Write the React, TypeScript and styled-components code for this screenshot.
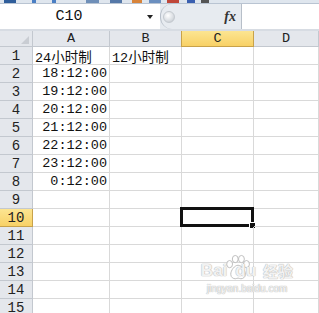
import React from 'react';
import styled, { createGlobalStyle, css } from 'styled-components';

const GlobalStyle = createGlobalStyle`
  html, body {
    margin: 0;
    padding: 0;
    background: #ffffff;
    overflow: hidden;
  }
`;

const COLS = ['A', 'B', 'C', 'D'];
const ROW_COUNT = 15;
const ACTIVE_COL = 'C';
const ACTIVE_ROW = 10;

const cellValues: Record<string, { text: string; align?: 'left' | 'right' }> = {
  A1: { text: '24小时制' },
  B1: { text: '12小时制' },
  A2: { text: '18:12:00', align: 'right' },
  A3: { text: '19:12:00', align: 'right' },
  A4: { text: '20:12:00', align: 'right' },
  A5: { text: '21:12:00', align: 'right' },
  A6: { text: '22:12:00', align: 'right' },
  A7: { text: '23:12:00', align: 'right' },
  A8: { text: '0:12:00', align: 'right' },
};

const cellFont = css`
  font-family: "Liberation Mono", "Noto Sans CJK SC", monospace;
  font-size: 13.5px;
  color: #111;
`;

const Frame = styled.div`
  width: 319px;
  height: 313px;
  overflow: hidden;
  display: flex;
  flex-direction: column;
  position: relative;
  background: #fff;
`;

const Toolbar = styled.div`
  flex: none;
  height: 3px;
  background: #dfe6ee;
  border-bottom: 1px solid #b9c4d2;
  display: flex;
  align-items: flex-end;
  overflow: hidden;
`;

const ToolIcon = styled.span<{ $x: number; $w: number; $color: string }>`
  display: block;
  margin-left: ${({ $x }) => $x}px;
  width: ${({ $w }) => $w}px;
  height: 3px;
  background: ${({ $color }) => $color};
  flex: none;
`;

const FormulaBar = styled.div`
  flex: none;
  height: 25px;
  display: flex;
  border-bottom: 2px solid #d7dce3;
  background: #e6eaef;
`;

const NameBox = styled.div`
  width: 160px;
  background: #fff;
  position: relative;
  display: flex;
  align-items: center;
  justify-content: center;
  font-family: "Liberation Mono", monospace;
  font-size: 15px;
  color: #111;
  padding-right: 22px;
  box-sizing: border-box;
`;

const DropArrow = styled.span`
  position: absolute;
  right: 7px;
  top: 11px;
  width: 0;
  height: 0;
  border-left: 3.5px solid transparent;
  border-right: 3.5px solid transparent;
  border-top: 4px solid #222;
`;

const FxArea = styled.div`
  width: 81px;
  display: flex;
  align-items: center;
  justify-content: space-between;
  background: #e7ebf0;
  border-radius: 12px 0 0 12px;
  border-left: 1px solid #b7bfc9;
  box-sizing: border-box;
  padding: 0 5px 0 2px;
`;

const Dimple = styled.span`
  width: 10px;
  height: 10px;
  border-radius: 50%;
  background: radial-gradient(circle at 40% 35%, #ffffff 0%, #d9dde2 60%, #b7bcc3 100%);
  border: 1px solid #c4c9cf;
`;

const FxLabel = styled.span`
  font-family: "Liberation Serif", serif;
  font-style: italic;
  font-weight: bold;
  font-size: 14px;
  color: #333;
`;

const FormulaInput = styled.div`
  flex: 1;
  background: #fff;
  border-left: 1px solid #b7bfc9;
`;

const Grid = styled.div`
  flex: none;
  display: grid;
  grid-template-columns: 33px 77px 72px 72px 1fr;
  grid-template-rows: 16px;
  grid-auto-rows: 18px;
`;

const Corner = styled.div`
  background: #e4e7ec;
  border-right: 1px solid #c3c8cf;
  border-bottom: 1px solid #c3c8cf;
  position: relative;
  &::after {
    content: '';
    position: absolute;
    right: 3px;
    bottom: 2px;
    width: 0;
    height: 0;
    border-left: 8px solid transparent;
    border-bottom: 8px solid #c9cdd3;
  }
`;

const Header = styled.div<{ $active?: boolean }>`
  display: flex;
  align-items: center;
  justify-content: center;
  font-family: "Liberation Mono", monospace;
  font-size: 13.5px;
  color: #222;
  box-sizing: border-box;
  background: ${({ $active }) => ($active ? 'linear-gradient(#fce592, #f8d166)' : '#e4e7ec')};
  border-right: 1px solid ${({ $active }) => ($active ? '#c8a24a' : '#c3c8cf')};
  border-bottom: 1px solid ${({ $active }) => ($active ? '#c8a24a' : '#c3c8cf')};
  ${({ $active }) => $active && css`border-left: 1px solid #c8a24a; margin-left: -1px;`}
`;

const RowHeader = styled(Header)`
  font-size: 14px;
`;

const Cell = styled.div<{ $align?: 'left' | 'right' }>`
  ${cellFont};
  box-sizing: border-box;
  border-right: 1px solid #d9d9d9;
  border-bottom: 1px solid #d9d9d9;
  display: flex;
  align-items: center;
  justify-content: ${({ $align }) => ($align === 'right' ? 'flex-end' : 'flex-start')};
  padding: 0 2px 0 2px;
  white-space: nowrap;
  position: relative;
`;

const Selection = styled.span`
  position: absolute;
  left: -2px;
  top: -2px;
  right: -1px;
  bottom: -1px;
  border: 3px solid #111;
  pointer-events: none;
  &::after {
    content: '';
    position: absolute;
    right: -5px;
    bottom: -5px;
    width: 5px;
    height: 5px;
    background: #111;
    border: 1px solid #fff;
  }
`;

const Watermark = styled.div`
  position: absolute;
  left: 198px;
  top: 254px;
  width: 98px;
  display: flex;
  flex-direction: column;
  align-items: center;
  pointer-events: none;
  color: rgba(255, 255, 255, 0.85);
  text-shadow: 0 0 1px #b0b0b0, 0 0 1px #b0b0b0;
`;

const MarkTop = styled.div`
  display: flex;
  align-items: flex-end;
  font-family: "Liberation Sans", "Noto Sans CJK SC", sans-serif;
  font-weight: bold;
  font-size: 17px;
  line-height: 1;
`;

const MarkUrl = styled.div`
  font-family: "Liberation Sans", sans-serif;
  font-size: 10px;
  margin-top: 4px;
`;

function Paw() {
  return (
    <svg width="27" height="27" viewBox="0 0 24 24" style={{ margin: '0 0 -2px -3px' }}>
      <g fill="rgba(255,255,255,0.85)" stroke="#b8b8b8" strokeWidth="0.8">
        <ellipse cx="5" cy="9" rx="2.6" ry="3.2" />
        <ellipse cx="10" cy="4.5" rx="2.6" ry="3.2" />
        <ellipse cx="15.5" cy="4.5" rx="2.6" ry="3.2" />
        <ellipse cx="20" cy="9" rx="2.6" ry="3.2" />
        <path d="M12.5 10c3 0 6.5 4.5 6.5 8 0 3-2.5 4-4 4-1.2 0-1.5-.6-2.5-.6s-1.3.6-2.5.6c-1.5 0-4-1-4-4 0-3.5 3.5-8 6.5-8z" />
      </g>
    </svg>
  );
}

export default function App() {
  const rows = Array.from({ length: ROW_COUNT }, (_, i) => i + 1);
  return (
    <>
      <GlobalStyle />
      <Frame>
        <Toolbar>
          <ToolIcon $x={4} $w={12} $color="#2f5d9a" />
          <ToolIcon $x={16} $w={4} $color="#4a7fc4" />
          <ToolIcon $x={16} $w={4} $color="#4a7fc4" />
          <ToolIcon $x={30} $w={13} $color="#6f8fb8" />
          <ToolIcon $x={11} $w={12} $color="#5578a8" />
          <ToolIcon $x={10} $w={10} $color="#d8843a" />
          <ToolIcon $x={7} $w={12} $color="#6b8fbf" />
          <ToolIcon $x={6} $w={12} $color="#c0473a" />
          <ToolIcon $x={8} $w={8} $color="#3a5fb0" />
          <ToolIcon $x={6} $w={8} $color="#555" />
        </Toolbar>
        <FormulaBar>
          <NameBox>
            C10
            <DropArrow />
          </NameBox>
          <FxArea>
            <Dimple />
            <FxLabel>fx</FxLabel>
          </FxArea>
          <FormulaInput />
        </FormulaBar>
        <Grid>
          <Corner />
          {COLS.map((c) => (
            <Header key={c} $active={c === ACTIVE_COL}>{c}</Header>
          ))}
          {rows.map((r) => (
            <React.Fragment key={r}>
              <RowHeader $active={r === ACTIVE_ROW}>{r}</RowHeader>
              {COLS.map((c) => {
                const v = cellValues[`${c}${r}`];
                return (
                  <Cell key={c} $align={v?.align}>
                    {v?.text}
                    {c === ACTIVE_COL && r === ACTIVE_ROW && <Selection />}
                  </Cell>
                );
              })}
            </React.Fragment>
          ))}
        </Grid>
        <Watermark>
          <MarkTop>
            <span>Bai</span>
            <Paw />
            <span style={{ marginLeft: -16 }}>du</span>
            <span style={{ marginLeft: 7, fontSize: 15 }}>经验</span>
          </MarkTop>
          <MarkUrl>jingyan.baidu.com</MarkUrl>
        </Watermark>
      </Frame>
    </>
  );
}
